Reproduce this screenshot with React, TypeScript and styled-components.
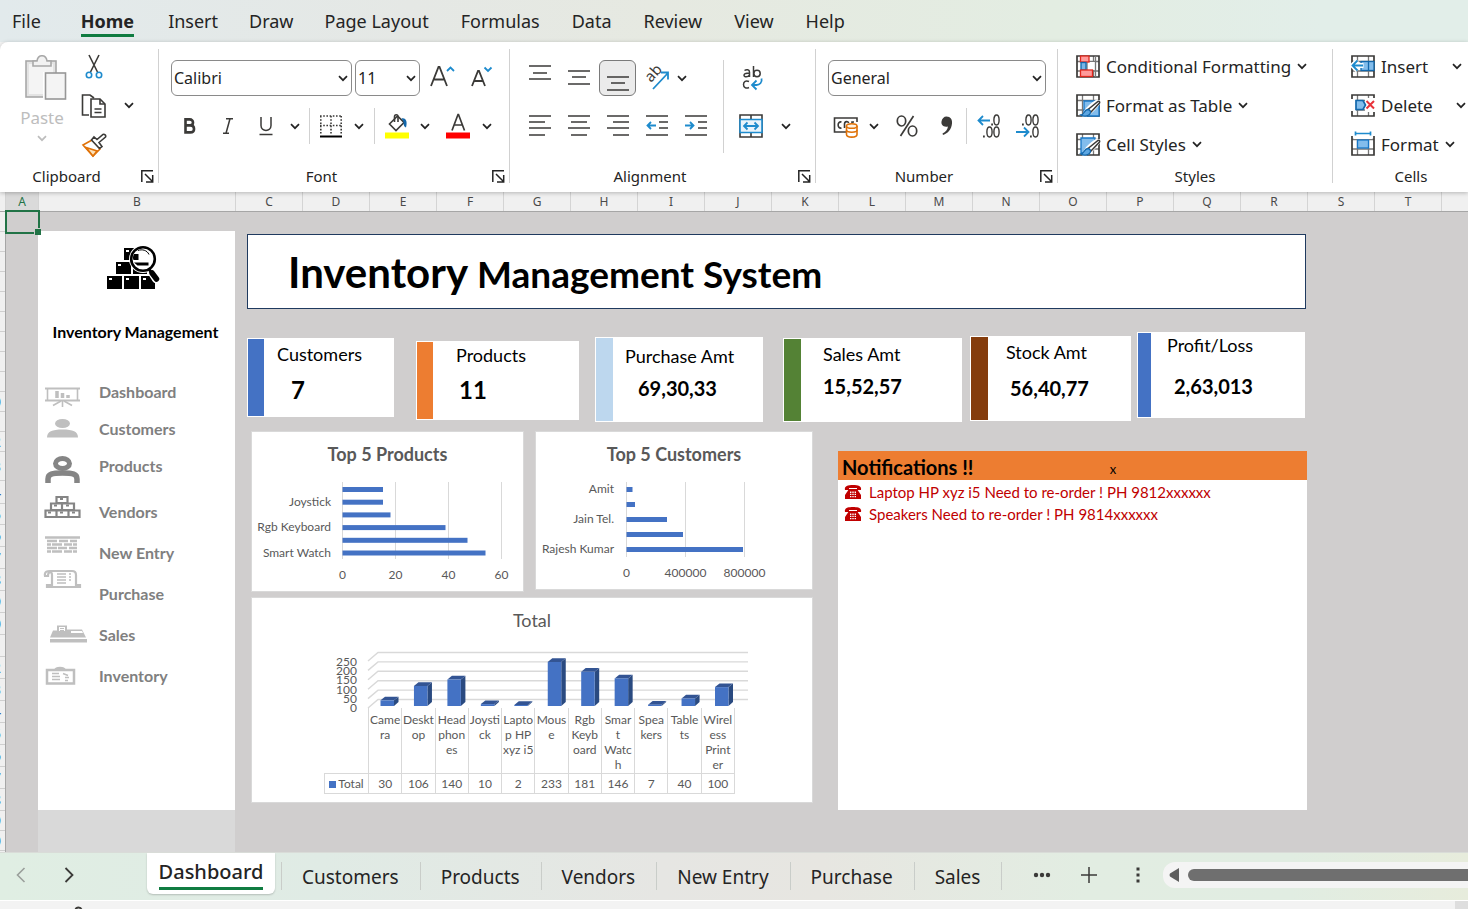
import React from "react";
import styled, { createGlobalStyle, css } from "styled-components";

const ui = `"Noto Sans", "Open Sans", sans-serif`;
const sheetFont = `Lato, "Open Sans", sans-serif`;
const ink = "#242424";
const line = "#3b3a38";
const azure = "#1e8bcd";
const green = "#107c41";

const GlobalStyle = createGlobalStyle`
  *, *::before, *::after { box-sizing: border-box; }
  body { margin: 0; font-family: ${ui}; color: ${ink}; background: #f3f3f3; overflow-x: hidden; }
  button, select { font: inherit; color: inherit; }
  button { border: 0; padding: 0; background: none; cursor: pointer; }
  svg { display: block; }
  ul { list-style: none; margin: 0; padding: 0; }
  h1, h2, p { margin: 0; }
`;

const Page = styled.div`
  display: flex;
  flex-direction: column;
  min-height: 100vh;
  overflow: hidden;
`;

/* ---------- menu ---------- */

const MenuBar = styled.nav`
  display: flex;
  flex: none;
  height: 42px;
  padding: 0 12px;
  background: linear-gradient(90deg, #e2eaec 0%, #e5e8e5 28%, #e6e9e1 45%, #e3ede2 72%, #e2eee9 90%, #e2eee9 100%);
`;

const MenuItem = styled.button<{ $active?: boolean; $after?: number }>`
  height: 42px;
  margin-right: ${(p) => p.$after ?? 32}px;
  font-size: 18px;
  line-height: 42px;
  white-space: nowrap;
  font-weight: ${(p) => (p.$active ? 700 : 400)};
  ${(p) =>
    p.$active &&
    css`
      background: linear-gradient(${green}, ${green}) 0 34px / 100% 3px no-repeat;
    `}
`;

/* ---------- ribbon ---------- */

const Ribbon = styled.div`
  display: flex;
  flex: none;
  height: 150px;
  padding: 5px 0 3px;
  background: #fff;
  border-radius: 8px 0 0 0;
  box-shadow: 0 1px 4px rgba(0, 0, 0, 0.25);
  position: relative;
  z-index: 2;
`;

const Group = styled.section<{ $width: number }>`
  display: flex;
  flex-direction: column;
  flex: none;
  width: ${(p) => p.$width}px;
`;

const GroupBody = styled.div<{ $left: number; $top?: number }>`
  display: flex;
  height: 117px;
  padding: ${(p) => p.$top ?? 0}px 0 0 ${(p) => p.$left}px;
`;

const GroupFooter = styled.footer<{ $launch?: boolean }>`
  display: grid;
  grid-template-columns: ${(p) => (p.$launch ? "1fr 25px" : "1fr")};
  align-items: center;
  height: 24px;
  font-size: 15px;
  text-align: center;
`;

const GroupRule = styled.i`
  flex: none;
  width: 1px;
  height: 134px;
  margin-top: 2px;
  background: #d1d1d1;
`;

const Rule = styled.i<{ $height: number; $gap?: number }>`
  flex: none;
  width: 1px;
  height: ${(p) => p.$height}px;
  margin: 0 ${(p) => p.$gap ?? 0}px;
  background: #d1d1d1;
`;

const Stack = styled.div<{ $gap?: number }>`
  display: flex;
  flex-direction: column;
  gap: ${(p) => p.$gap ?? 0}px;
`;

const Row = styled.div<{ $height?: number; $gap?: number }>`
  display: flex;
  align-items: center;
  height: ${(p) => p.$height ?? 36}px;
  gap: ${(p) => p.$gap ?? 0}px;
`;

const IconButton = styled.button<{ $width?: number; $on?: boolean }>`
  display: flex;
  flex: none;
  align-items: center;
  justify-content: center;
  width: ${(p) => p.$width ?? 38}px;
  height: 36px;
  ${(p) =>
    p.$on &&
    css`
      margin: 0 1px;
      background: #ebebeb;
      border: 1px solid #7a7a7a;
      border-radius: 6px;
    `}
`;

const PasteButton = styled.button`
  display: flex;
  flex-direction: column;
  align-items: center;
  width: 46px;
  height: 108px;
  margin-top: 8px;
  color: #bdbdbd;
  font-size: 17px;
  line-height: 24px;
  gap: 5px;
`;

const Picker = styled.div<{ $width: number }>`
  position: relative;
  width: ${(p) => p.$width}px;
  height: 36px;
`;

const Select = styled.select`
  appearance: none;
  width: 100%;
  height: 36px;
  padding: 0 2px;
  border: 1px solid #8a8a8a;
  border-radius: 6px;
  background: #fff;
  font-size: 16px;
`;

const PickerArrow = styled.span`
  position: absolute;
  right: 4px;
  top: 15px;
  pointer-events: none;
`;

const TextButton = styled.button<{ $width?: number }>`
  display: flex;
  align-items: center;
  height: 39px;
  gap: 6px;
  width: ${(p) => (p.$width ? `${p.$width}px` : "auto")};
  font-size: 17px;
  white-space: nowrap;
`;

const LaunchButton = styled.button`
  display: flex;
  justify-content: flex-end;
  padding-right: 4px;
`;

const Chevron = ({ color = ink }: { color?: string }) => (
  <svg width="10" height="7" viewBox="0 0 10 7" fill="none" stroke={color} strokeWidth="1.7">
    <path d="M1 1.2 5 5.2 9 1.2" />
  </svg>
);

const Launcher = () => (
  <svg width="13" height="13" viewBox="0 0 13 13" fill="none" stroke={ink} strokeWidth="1.5">
    <path d="M.8 12V.8H12M4 4l7 7M11.7 5v7H5" />
  </svg>
);

const Footer = ({ label, launch }: { label: string; launch?: boolean }) => (
  <GroupFooter $launch={launch}>
    <span>{label}</span>
    {launch && (
      <LaunchButton aria-label={`${label} settings`}>
        <Launcher />
      </LaunchButton>
    )}
  </GroupFooter>
);

const MoreButton = ({ label, width = 20, color }: { label: string; width?: number; color?: string }) => (
  <IconButton $width={width} aria-label={label}>
    <Chevron color={color} />
  </IconButton>
);

const PasteIcon = () => (
  <svg width="50" height="46" viewBox="-8 0 50 46" fill="#e3e3e3" stroke="#a8a8a8" strokeWidth="1.6">
    <rect x="1" y="6" width="30" height="36" />
    <rect x="4" y="9" width="24" height="30" fill="#f4f4f4" stroke="none" />
    <path d="M8 11V6h4c1-7 9-7 10 0h4v5z" fill="#f2f2f2" />
    <rect x="18" y="17" width="4" height="28" fill="#fff" stroke="none" />
    <rect x="20.5" y="18" width="20" height="26" fill="#f4f4f4" stroke="#979797" />
  </svg>
);

const CutIcon = () => (
  <svg width="18" height="26" viewBox="0 0 18 26" fill="none" strokeWidth="1.6">
    <path d="M4 1 12.5 18M14 1 5.5 18" stroke={line} />
    <circle cx="4" cy="21" r="2.7" stroke={azure} />
    <circle cx="14" cy="21" r="2.7" stroke={azure} />
  </svg>
);

const CopyIcon = () => (
  <svg width="26" height="26" viewBox="0 0 26 26" fill="#fff" stroke={line} strokeWidth="1.6">
    <path d="M8 22H1.5V2H9l4 3" />
    <path d="M10 6h9l5 5v13H10z" />
    <path d="M19 6v5h5M13.5 16h7M13.5 19.5h7" fill="none" />
  </svg>
);

const BrushIcon = () => (
  <svg width="26" height="26" viewBox="0 0 26 26" fill="none" strokeWidth="1.6">
    <path d="M2 13 11 8l8 9-7 7z" fill="#fff" stroke="#e07208" />
    <path d="M5 15.500l11 3.500-4 5z" fill="#fde2b8" stroke="#e07208" />
    <path d="M10.500 8l8 8.500 2.500-2-3-4 6.500-5.500c.8-1.500-1-3.200-2.500-2.500L16 7.500 13 5z" fill="#fff" stroke={line} />
  </svg>
);

const GrowIcon = ({ up }: { up?: boolean }) => (
  <svg width="26" height="26" viewBox="0 0 26 26" fill="none" strokeWidth="1.8">
    {up ? (
      <>
        <path d="M2 21 9.500 2h1L18 21M5 14.500h10" stroke={line} />
        <path d="M18 6l3.500-3.500L25 6" stroke={azure} />
      </>
    ) : (
      <>
        <path d="M2 21 8 6h1l6 15M4.500 16h8" stroke={line} />
        <path d="M14.500 2.500 18 6l3.500-3.500" stroke={azure} />
      </>
    )}
  </svg>
);

const BoldIcon = () => (
  <svg width="14" height="18" viewBox="0 0 14 18" fill="none" stroke={line} strokeWidth="2.6">
    <path d="M2.500 2.400h4.200c4.400 0 4.400 6 0 6H2.500zM2.500 8.400h4.800c5 0 5 7 0 7H2.500z" />
  </svg>
);

const ItalicIcon = () => (
  <svg width="14" height="18" viewBox="0 0 14 18" fill="none" stroke={line} strokeWidth="1.5">
    <path d="M5 1.700h7M2 16.200h6M9 1.700 5 16.200" />
  </svg>
);

const UnderlineIcon = () => (
  <svg width="16" height="20" viewBox="0 0 16 20" fill="none" stroke={line} strokeWidth="1.5">
    <path d="M3 1v8.500c0 6.500 10 6.500 10 0V1M1.500 18.500h13" />
  </svg>
);

const BordersIcon = () => (
  <svg width="24" height="24" viewBox="0 0 24 24" fill="none" stroke={line} strokeWidth="1.6">
    <path d="M1 2h22M1 11.500h22M1.800 2v18M12 2v18M22.200 2v18" strokeDasharray="1.6 1.6" />
    <path d="M1 22.500h22" stroke="#000" strokeWidth="2" />
  </svg>
);

const FillIcon = () => (
  <svg width="24" height="26" viewBox="0 0 24 26" fill="none" stroke={line} strokeWidth="1.6">
    <path d="M12.500 3 4.500 11l6.500 6.500 8-8z" fill="#fff" />
    <path d="M9.500 9V4c0-3 3.500-3 3.500 0v5" />
    <path d="M16.500 5.500c5-1 6 4 4.500 9-2.500-1-2.500-4-2.500-6z" fill="#1267ab" stroke="none" />
    <rect y="19.500" width="24" height="6" fill="#ff0" stroke="none" />
  </svg>
);

const FontColorIcon = () => (
  <svg width="24" height="26" viewBox="0 0 24 26" fill="none" stroke={line} strokeWidth="1.7">
    <path d="M6 17.500 12 1.500h.5l6 16M8 12h8.500" />
    <rect y="19.500" width="24" height="6" fill="#f00" stroke="none" />
  </svg>
);

/** Horizontal rules given as [x1, x2, y] on a 22px square. */
const Lines = ({ rules, children }: { rules: number[][]; children?: React.ReactNode }) => (
  <svg width="22" height="22" viewBox="0 0 22 22" overflow="visible" fill="none" strokeWidth="1.6">
    <path d={rules.map(([a, b, y]) => `M${a} ${y}H${b}`).join("")} stroke={line} />
    {children}
  </svg>
);

const OrientIcon = () => (
  <svg width="26" height="26" viewBox="0 0 26 26" overflow="visible" fill="none">
    <text transform="translate(7 18) rotate(-48)" fontSize="15" fill={line}>
      ab
    </text>
    <path d="M9 24 24 8M17 7.500h7v7" stroke={azure} strokeWidth="1.8" />
  </svg>
);

const WrapIcon = () => (
  <svg width="24" height="26" viewBox="0 0 24 26" fill="none" strokeWidth="1.5" stroke={line}>
    <path d="M4.500 5.500c2-1.500 5-1 5 1.500V12M9.500 8c-3 0-5.500.3-5.500 2.300 0 2 4 2.300 5.500-.5" />
    <path d="M13.500 1v11" />
    <circle cx="17" cy="8.500" r="3.200" />
    <path d="M9 16.500c-3-1.500-5.500 0-5.500 3s2.500 4.500 5.500 3" />
    <path d="M21.500 13.500c1 4-2 6.500-5 6.500h-4M16.500 15.500 12 20l4.500 4.500" stroke={azure} strokeWidth="1.8" />
  </svg>
);

const MergeIcon = () => (
  <svg width="24" height="24" viewBox="0 0 24 24" fill="none" strokeWidth="1.6">
    <path d="M1 1h22v22H1zM12 1v22" stroke={line} />
    <path d="M1 5.500h22v13H1z" fill="#eaf4fb" stroke={azure} />
    <path d="M5 12h14M8.500 8.500 5 12l3.500 3.500M15.500 8.500 19 12l-3.500 3.500" stroke={azure} strokeWidth="1.8" />
  </svg>
);

const MoneyIcon = () => (
  <svg width="26" height="24" viewBox="0 0 26 24" fill="none" strokeWidth="1.6" stroke={line}>
    <path d="M13 18H1.500V4H24v4M8.500 8C4 7 4 15 8.500 14M11.500 14v-4c0-3 4-3 4-1M19 9V8h2" />
    <path d="M13.500 12v8.500c0 3.500 10.500 3.500 10.500 0V12" fill="#fff" stroke="#e07208" />
    <ellipse cx="18.750" cy="12" rx="5.250" ry="2.300" fill="#fff4e5" stroke="#e07208" />
    <path d="M13.500 16c0 3 10.500 3 10.500 0" stroke="#e07208" />
  </svg>
);

const PercentIcon = () => (
  <svg width="24" height="24" viewBox="0 0 24 24" fill="none" stroke={line} strokeWidth="1.7">
    <ellipse cx="6.500" cy="7" rx="4.200" ry="5" />
    <ellipse cx="17.500" cy="17" rx="4.200" ry="5" />
    <path d="M18.500 2 5.500 22" />
  </svg>
);

const CommaIcon = () => (
  <svg width="14" height="22" viewBox="0 0 14 22" fill={line}>
    <path d="M6.500 1.500c4 0 6 3 5.500 7-.5 5.500-4 10-9 11.500l-.5-1.500c3-1.500 5-3.500 5.500-7-5 1-7-2-6.500-5 .4-3 2.500-5 5-5z" />
  </svg>
);

const DecimalIcon = ({ more }: { more?: boolean }) => (
  <svg width="26" height="26" viewBox="0 0 26 26" fill="none" stroke={line} strokeWidth="1.4">
    {more ? (
      <>
        <ellipse cx="20.500" cy="7" rx="2.600" ry="5" />
        <ellipse cx="13.500" cy="19" rx="2.600" ry="5" />
        <ellipse cx="20.500" cy="19" rx="2.600" ry="5" />
        <path d="M7 23.500h1.800M15.200 11.500H17" strokeWidth="1.8" />
        <path d="M14 7.500H2.500M7 3 2.500 7.500 7 12" stroke={azure} strokeWidth="1.8" />
      </>
    ) : (
      <>
        <ellipse cx="13.500" cy="7" rx="2.600" ry="5" />
        <ellipse cx="20.500" cy="7" rx="2.600" ry="5" />
        <ellipse cx="20.500" cy="19" rx="2.600" ry="5" />
        <path d="M7 11.500h1.800M15 23.500h1.800" strokeWidth="1.8" />
        <path d="M1 19h12.500M9 14.500l4.500 4.500L9 23.500" stroke={azure} strokeWidth="1.8" />
      </>
    )}
  </svg>
);

const gridLines = "M1 6.500h22M1 16h22M6.500 1v21M17.500 1v21";

const GridIcon = ({ children, top }: { children: React.ReactNode; top?: boolean }) => (
  <svg width="24" height="23" viewBox="0 0 24 23" overflow="visible" fill="none" strokeWidth="1.3">
    <path d={gridLines} stroke="#777" />
    <path d={top ? "M1 3v19h22V3" : "M1 1h22v21H1z"} stroke={line} strokeWidth="1.7" />
    {children}
  </svg>
);

const CondIcon = () => (
  <GridIcon>
    <rect x="11" y="7" width="9" height="8" fill="#fff" />
    <path d="M11 1v21M19.500 1v21" stroke="#777" />
    <rect x="4.500" y="1" width="8.500" height="6" fill="#ff9a9a" stroke="#e0281e" />
    <rect x="5" y="7.500" width="5" height="7.500" fill="#7ab6e8" stroke="#1267ab" />
    <rect x="4.500" y="15" width="12" height="6.500" fill="#ff9a9a" stroke="#e0281e" />
  </GridIcon>
);

const PaintedGrid = ({ full }: { full?: boolean }) => (
  <GridIcon>
    <path d={full ? "M5 5h14v5L9 20H5z" : "M8 7h15v15H8z"} fill="#83bdec" stroke="#1878c8" />
    <path d="M8 21.500c5 0 14-10 16-14L20.500 7C17 9 11 14 9.500 17z" fill="#fff" stroke="#fff" strokeWidth="2.5" />
    <path d="M12 15.500 22 7.500c1.500-.5 2 .5 1.500 1.500L15 18z" fill="#fff" stroke={line} strokeWidth="1.5" />
    <path d="M5 21c3 0 3-5 6.500-5.500 3 0 4 3 2 5-2 1.800-6 2.500-8.500.5z" fill="#5ea7e2" stroke="#1267ab" />
  </GridIcon>
);

const InsertCellsIcon = () => (
  <GridIcon>
    <rect x="10" y="6.500" width="13" height="9" fill="#83bdec" stroke="#1267ab" />
    <path d="M17.500 6.500v9" stroke="#1267ab" />
    <path d="M12.500 10.500H1.500M6.500 5.500l-5 5 5 5" stroke="#fff" strokeWidth="5" />
    <path d="M12 10.500H1.500M6.500 5.500l-5 5 5 5" stroke={azure} strokeWidth="1.8" />
  </GridIcon>
);

const DeleteCellsIcon = () => (
  <GridIcon>
    <path d="M0 5h5v12H0zM14 4h10v14H14z" fill="#fff" />
    <path d="M5 6.500h7l2.500 4.500-2.500 4.500H5z" fill="#83bdec" stroke="#1267ab" strokeWidth="1.7" />
    <path d="m15.500 7 7.500 7.500M23 7l-7.500 7.500" stroke="#e8333a" strokeWidth="2" />
  </GridIcon>
);

const FormatCellsIcon = () => (
  <GridIcon top>
    <path d="M3 0h18v6H3z" fill="#fff" />
    <path d="M4.500-1.500v4m15-4v4M4.500.500h15" stroke={azure} strokeWidth="1.7" />
    <rect x="6.500" y="7" width="11" height="8" fill="#83bdec" stroke="#1878c8" />
  </GridIcon>
);

/* ---------- sheet frame ---------- */

const ColumnHeads = styled.div`
  display: flex;
  flex: none;
  height: 20px;
  background: #f0f0f0;
  border-bottom: 1px solid #a6a6a6;
  overflow: hidden;
`;

const ColumnHead = styled.div<{ $width: number; $selected?: boolean }>`
  flex: none;
  width: ${(p) => p.$width}px;
  height: 19px;
  border-right: 1px solid #d4d4d4;
  font-size: 12px;
  line-height: 20px;
  text-align: center;
  color: #4a4a4a;
  ${(p) =>
    p.$selected &&
    css`
      color: #217346;
      background: #dadada;
    `}
`;

const Sheet = styled.main`
  display: flex;
  flex: 1;
  background: #d0cece;
  position: relative;
`;

const RowHeads = styled.div`
  flex: none;
  width: 6px;
  background: #f0f0f0;
  border-right: 1px solid #a6a6a6;
  overflow: hidden;
`;

const RowHead = styled.div<{ $height: number }>`
  display: flex;
  justify-content: flex-end;
  height: ${(p) => p.$height}px;
  border-bottom: 1px solid #cfcfcf;
`;

const RowNumber = styled.span<{ $height: number }>`
  flex: none;
  width: 24px;
  font-size: 14px;
  line-height: ${(p) => p.$height}px;
  text-align: center;
  color: #2d5a9b;
`;

const ActiveCell = styled.div`
  position: absolute;
  left: 5px;
  top: -2px;
  width: 35px;
  height: 24px;
  border: 2px solid #217346;
  &::after {
    content: "";
    position: absolute;
    right: -3px;
    bottom: -3px;
    width: 7px;
    height: 7px;
    background: #217346;
    border: 1px solid #d0cece;
    border-width: 1px 0 0 1px;
  }
`;

/* ---------- dashboard sidebar ---------- */

const Sidebar = styled.aside`
  display: flex;
  flex-direction: column;
  flex: none;
  width: 197px;
  margin-left: 32px;
  padding-top: 19px;
  font-family: ${sheetFont};
`;

const SidePanel = styled.div`
  height: 579px;
  padding-top: 14px;
  background: #fff;
`;

const SideRest = styled.div`
  flex: 1;
  min-height: 41px;
  background: #d9d9d9;
`;

const SideTitle = styled.h2`
  margin: 31px 0;
  padding-right: 2px;
  font-size: 16px;
  line-height: 20px;
  font-weight: 700;
  color: #000;
  text-align: center;
  white-space: nowrap;
`;

const SideLink = styled.a<{ $height: number; $before?: number }>`
  display: flex;
  align-items: center;
  height: ${(p) => p.$height}px;
  margin-top: ${(p) => p.$before ?? 0}px;
  font-size: 16px;
  font-weight: 700;
  color: #808080;
  text-decoration: none;
  svg {
    flex: none;
    margin-right: 1px;
    overflow: visible;
  }
`;

const LogoRow = styled.div`
  display: flex;
  justify-content: center;
  height: 46px;
  padding-right: 6px;
`;

const Logo = () => (
  <svg width="56" height="46" viewBox="0 0 56 46">
    <path d="M1 31h15v13H1zM18 31h15v13H18zM35 31h14v13H35zM10 17h15v12H10zM27 17h14v12H27zM18 3h14v12H18z" fill="#000" />
    <path d="M3 33h3v2H3zM20 33h3v2h-3zM37 33h3v2h-3zM12 19h3v2h-3zM20 5h3v2h-3z" fill="#fff" />
    <path d="m43 23 7 11" stroke="#fff" strokeWidth="8" strokeLinecap="round" />
    <circle cx="37" cy="14" r="14" fill="#fff" />
    <path d="m43 24 2 3" stroke="#000" strokeWidth="3" />
    <path d="m46 28 4.500 6" stroke="#000" strokeWidth="5.500" strokeLinecap="round" />
    <circle cx="37" cy="14" r="11.800" fill="#fff" stroke="#000" strokeWidth="2.600" />
    <path d="M28 9c-1 2-1.500 4-.5 6h5V9zM28 17.500h14.500v3h-11z" fill="#000" />
    <path d="M32 5.500c4-1.500 9-.5 11 4" stroke="#000" strokeWidth="1" fill="none" />
  </svg>
);

const light = "#bfbfbf";
const dark = "#858585";

const sideItems = [
  {
    label: "Dashboard",
    height: 37,
    art: (
      <g fill="none" stroke={light}>
        <path d="M7 15.500h35" strokeWidth="2" />
        <path d="M7 27.500h35" strokeWidth="2" />
        <path d="M9.500 16v11M39.500 16v11" strokeWidth="1.6" />
        <path d="M24.500 28v6M23 28l-8 4.500M26 28l8 4.500" strokeWidth="1.6" />
        <path d="M19 18v7M24.500 20v5M30 22v3" strokeWidth="3.5" />
      </g>
    ),
  },
  {
    label: "Customers",
    height: 37,
    art: (
      <g fill={light}>
        <ellipse cx="24.500" cy="13.500" rx="7.500" ry="4.500" />
        <path d="M9 27.500c0-6 5-8 15.500-8S40 21.500 40 27.500z" />
      </g>
    ),
  },
  {
    label: "Products",
    height: 37,
    art: (
      <g fill="none" stroke={dark}>
        <ellipse cx="24.500" cy="16.500" rx="7" ry="5" strokeWidth="5" />
        <path d="M10 36v-4c0-5 4-6 14.500-6S39 27 39 32v4" strokeWidth="5.500" />
      </g>
    ),
  },
  {
    label: "Vendors",
    height: 41,
    before: 7,
    art: (
      <g fill="none" stroke={dark} strokeWidth="2.2">
        <path d="M18.500 6h11v6h-11zM13 12.500h11V19H13zM24 12.500h12V19H24zM7.500 19.500h11V26h-11zM18.500 19.500h12V26h-12zM30.500 19.500h11V26h-11z" />
        <path d="M22 8h3M16 14.500h3M28 14.500h3M10 21.500h3M22 21.500h3M34 21.500h3" />
      </g>
    ),
  },
  {
    label: "New Entry",
    height: 41,
    art: (
      <g fill="none" stroke={light} strokeWidth="2.4">
        <path d="M7 5.500h35" />
        <path d="M9 9h10M21 9h9M32 9h7M9 12.500h4M14 12.500h10M26 12.500h8M35 12.500h4M9 16h10M20 16h9M31 16h8M9 19.500h4M14 19.500h10M26 19.500h8M35 19.500h4" />
      </g>
    ),
  },
  {
    label: "Purchase",
    height: 41,
    art: (
      <g fill="none" stroke={light} strokeWidth="2.2">
        <path d="M7 3c-1-5 3-5 5-5h22c3 0 4 2 4 4v10h4v2H9v-2h5V2c0-4-4-4-4 1z" />
        <path d="M19 1h9M31 1h2M19 4h9M31 4h2M19 7h9M31 7h2M19 10h9" strokeWidth="1.5" />
      </g>
    ),
  },
  {
    label: "Sales",
    height: 41,
    art: (
      <g fill={light}>
        <path d="M12 23.500l3-7h4v-5h10v4h15l4 8zM12 25h37v3.500H12z" />
        <path d="M21 13h6v4h-6zM33 17h11l1 2H33z" fill="#fff" />
        <path d="M22 14h4v1h-4zM22 16h4v1h-4z" />
      </g>
    ),
  },
  {
    label: "Inventory",
    height: 41,
    art: (
      <g fill="none" stroke={light} strokeWidth="2">
        <path d="M9 15h27v13.500H9z" strokeWidth="2.5" />
        <path d="M17 15c1-3 9-3 10 0z" fill={light} />
        <path d="M14 18.500h7M14 21.500h8M14 24.500h8M25 18.500l5 2M27 22.500h4M27 25.500h3" strokeWidth="1.4" />
      </g>
    ),
  },
];

/* ---------- dashboard content ---------- */

const Board = styled.div`
  flex: 1;
  min-width: 0;
  padding: 22px 161px 41px 12px;
  font-family: ${sheetFont};
`;

const TitleBox = styled.h1`
  height: 75px;
  margin-right: 1px;
  padding-left: 40px;
  border: 1px solid #1f3a5f;
  background: #fff;
  color: #000;
  font-size: 37px;
  line-height: 75px;
  font-weight: 700;
  white-space: nowrap;
  span {
    font-size: 42px;
  }
`;

const Cards = styled.div`
  display: grid;
  grid-template-columns: 169fr 179fr 188fr 187fr 167fr 169fr;
  align-items: start;
  height: 98px;
  margin: 23px 1px 0 0;
`;

const Card = styled.article<{ $top: number; $height: number; $after: number; $color: string; $bar: number }>`
  height: ${(p) => p.$height}px;
  margin: ${(p) => p.$top}px ${(p) => p.$after}px 0 0;
  border: 1px solid #fff;
  border-left: 0;
  background: linear-gradient(${(p) => p.$color}, ${(p) => p.$color}) 1px 0 / ${(p) => p.$bar}px 100% no-repeat #fff;
  color: #000;
`;

const CardTitle = styled.h2<{ $left: number; $top: number }>`
  padding: ${(p) => p.$top}px 0 0 ${(p) => p.$left}px;
  font-size: 18px;
  line-height: 24px;
  font-weight: 400;
  white-space: nowrap;
`;

const CardValue = styled.p<{ $left: number; $gap: number; $large?: boolean }>`
  padding: ${(p) => p.$gap}px 0 0 ${(p) => p.$left}px;
  font-size: ${(p) => (p.$large ? 24 : 20)}px;
  line-height: 24px;
  font-weight: 700;
`;

const cards = [
  { title: "Customers", value: "7", color: "#4472c4", bar: 16, top: 6, height: 79, after: 22, tl: 30, vl: 44, tt: 3, gap: 12, large: true },
  { title: "Products", value: "11", color: "#ed7d31", bar: 16, top: 9, height: 79, after: 16, tl: 40, vl: 43, tt: 1, gap: 11, large: true },
  { title: "Purchase Amt", value: "69,30,33", color: "#bdd7ee", bar: 17, top: 5, height: 85, after: 20, tl: 30, vl: 43, tt: 6, gap: 8 },
  { title: "Sales Amt", value: "15,52,57", color: "#548235", bar: 17, top: 6, height: 84, after: 8, tl: 40, vl: 40, tt: 3, gap: 8 },
  { title: "Stock Amt", value: "56,40,77", color: "#843c0c", bar: 17, top: 4, height: 85, after: 6, tl: 36, vl: 40, tt: 3, gap: 12 },
  { title: "Profit/Loss", value: "2,63,013", color: "#4472c4", bar: 13, top: 0, height: 86, after: 1, tl: 30, vl: 37, tt: 0, gap: 17 },
];

const Lower = styled.div`
  display: grid;
  grid-template-columns: 562fr 469fr;
  gap: 25px;
  padding-left: 4px;
`;

const Charts = styled.div`
  display: grid;
  grid-template-columns: 273fr 278fr;
  column-gap: 11px;
  row-gap: 5px;
  align-items: start;
  align-content: start;
  padding-top: 1px;
`;

const ChartPanel = styled.figure<{ $height: number; $wide?: boolean }>`
  margin: 0;
  height: ${(p) => p.$height}px;
  border: 1px solid #d9d9d9;
  background: #fff;
  color: #595959;
  ${(p) => p.$wide && "grid-column: 1 / -1;"}
`;

const ChartTitle = styled.figcaption<{ $plain?: boolean }>`
  padding-top: 11px;
  font-size: 18px;
  line-height: 22px;
  font-weight: ${(p) => (p.$plain ? 400 : 700)};
  text-align: center;
`;

const Plot = styled.svg`
  width: 100%;
  height: 116px;
  font-family: ${sheetFont};
  font-size: 12px;
  fill: #595959;
`;

type BarChartProps = {
  origin: number;
  step: number;
  pitch: number;
  bottom: number;
  labelEnd: number;
  ticks: string[];
  bars: { width: number; label?: string }[];
  viewWidth: number;
};

/** Horizontal bar chart: one bar per entry from the top down. */
const BarChart = ({ origin, step, pitch, bottom, labelEnd, ticks, bars, viewWidth }: BarChartProps) => (
  <Plot viewBox={`0 0 ${viewWidth} 116`}>
    {ticks.map((t, i) => (
      <g key={t}>
        <path d={`M${origin + i * step} 17V${bottom}`} stroke="#d9d9d9" />
        <text x={origin + i * step} y={bottom + 20} textAnchor="middle">
          {t}
        </text>
      </g>
    ))}
    {bars.map((b, i) => (
      <g key={i}>
        <rect x={origin} y={22 + i * pitch} width={b.width} height="5" fill="#4472c4" />
        {b.label && (
          <text x={labelEnd} y={28 + i * pitch} textAnchor="end">
            {b.label}
          </text>
        )}
      </g>
    ))}
  </Plot>
);

const TotalArea = styled.div`
  width: 424px;
  margin-left: 72px;
`;

const TotalPlot = styled.svg`
  width: 424px;
  height: 62px;
  margin-top: 15px;
  overflow: visible;
  font-family: ${sheetFont};
  font-size: 12px;
  fill: #595959;
`;

const totals: [string[], number][] = [
  [["Came", "ra"], 30],
  [["Deskt", "op"], 106],
  [["Head", "phon", "es"], 140],
  [["Joysti", "ck"], 10],
  [["Lapto", "p HP", "xyz i5"], 2],
  [["Mous", "e"], 233],
  [["Rgb", "Keyb", "oard"], 181],
  [["Smar", "t", "Watc", "h"], 146],
  [["Spea", "kers"], 7],
  [["Table", "ts"], 40],
  [["Wirel", "ess", "Print", "er"], 100],
];

const TotalChart = () => (
  <TotalPlot viewBox="0 0 424 62">
    {[0, 50, 100, 150, 200, 250].map((v, i) => (
      <g key={v}>
        <path d={`M44 ${62 - i * 9.4}L54 ${53.5 - i * 9.4}H424`} fill="none" stroke="#d9d9d9" strokeWidth="1.4" />
        <text x="33" y={66 - i * 9.2} textAnchor="end">
          {v}
        </text>
      </g>
    ))}
    {totals.map(([, v], i) => {
      const x = 56.5 + i * 33.45;
      const top = 60 - Math.max(v * 0.189, 1);
      return (
        <g key={i}>
          <path d={`M${x + 13.5} ${top}l4.500-3.700V56l-4.500 4z`} fill="#2a4a80" />
          <path d={`M${x} ${top}l4.500-3.700h13.500l-4.500 3.700z`} fill="#335493" />
          <rect x={x} y={top} width="13.5" height={60 - top} fill="#4472c4" />
        </g>
      );
    })}
  </TotalPlot>
);

const TotalTable = styled.table`
  width: 411px;
  table-layout: fixed;
  border-collapse: collapse;
  font-size: 12px;
  line-height: 15px;
  text-align: center;
  th, td {
    padding: 0;
    font-weight: 400;
    border: 1px solid #d9d9d9;
  }
  thead th, thead td {
    height: 65px;
    padding-top: 4px;
    vertical-align: top;
    border-top: 0;
    white-space: nowrap;
  }
  thead td {
    width: 44px;
    border-left: 0;
  }
  tbody th, tbody td {
    height: 20px;
  }
`;

const Key = styled.i`
  display: inline-block;
  width: 7px;
  height: 7px;
  margin-right: 2px;
  background: #4472c4;
`;

const Notices = styled.section`
  height: 359px;
  margin-top: 21px;
  background: #fff;
`;

const NoticeHead = styled.header`
  display: grid;
  grid-template-columns: 270fr 199fr;
  align-items: center;
  height: 29px;
  padding-left: 4px;
  background: #ed7d31;
  color: #000;
  h2 {
    padding-top: 2px;
    font-size: 20px;
    line-height: 28px;
  }
`;

const NoticeClose = styled.button`
  justify-self: start;
  padding-top: 6px;
  font-size: 13px;
`;

const NoticeList = styled.ul`
  padding: 1px 0 0 6px;
`;

const Notice = styled.li`
  display: flex;
  align-items: center;
  gap: 7px;
  height: 22px;
  font-size: 15px;
  color: #c00000;
  white-space: nowrap;
`;

const Phone = () => (
  <svg width="18" height="14" viewBox="0 0 18 14" fill="#c00000">
    <path d="M1 5C0 1 4 0 9 0s9 1 8 5h-4V3H5v2z" />
    <path d="M5 4h8l4 6v4H1v-4z" />
    <path d="M6 6.500h1.400v1.400H6zM8.300 6.500h1.400v1.400H8.300zM10.600 6.500H12v1.400h-1.400zM6 8.700h1.400v1.400H6zM8.300 8.700h1.400v1.400H8.300zM10.600 8.700H12v1.400h-1.400zM6 10.900h1.400v1.400H6zM8.300 10.900h1.400v1.400H8.300zM10.600 10.900H12v1.400h-1.400z" fill="#fff" />
  </svg>
);

/* ---------- sheet tabs ---------- */

const TabBar = styled.div`
  display: flex;
  flex: none;
  height: 48px;
  overflow: hidden;
  border-top: 1px solid #d9dcd8;
  background: linear-gradient(90deg, #e0eee3 0%, #e0ebe5 22%, #e6e6e3 45%, #e7e6e1 56%, #e2ede2 74%, #e1ede2 88%, #e7ecdc 100%);
`;

const TabArrows = styled.div`
  display: flex;
  flex: none;
  align-items: center;
  width: 147px;
  height: 43px;
  padding-left: 12px;
  gap: 30px;
`;

const TabArrow = styled.button`
  display: flex;
  justify-content: center;
  width: 18px;
`;

const ActiveTab = styled.button`
  flex: none;
  height: 41px;
  width: 128px;
  padding-bottom: 3px;
  border-radius: 0 0 6px 6px;
  background: linear-gradient(${green}, ${green}) 12px 34px / 104px 3px no-repeat #fff;
  box-shadow: 0 1px 2px rgba(0, 0, 0, 0.2);
  font-size: 20px;
  line-height: 38px;
  font-weight: 500;
`;

const Tab = styled.button`
  flex: none;
  height: 48px;
  padding: 0 21px 0 20px;
  font-size: 19px;
  line-height: 48px;
  white-space: nowrap;
`;

const TabRule = styled.i<{ $before?: number }>`
  flex: none;
  width: 1px;
  height: 28px;
  margin: 9px 0 0 ${(p) => p.$before ?? 0}px;
  background: #c9cdc9;
`;

const TabTool = styled.button<{ $width: number; $left?: number }>`
  display: flex;
  flex: none;
  justify-content: center;
  align-items: center;
  width: ${(p) => p.$width}px;
  height: 44px;
  padding-left: ${(p) => p.$left ?? 0}px;
`;

const ScrollTrack = styled.div`
  display: flex;
  flex: 1;
  align-items: center;
  gap: 8px;
  height: 26px;
  margin-top: 9px;
  padding-left: 6px;
  background: #f4f4f4;
  border-radius: 12px 0 0 12px;
`;

const ScrollThumb = styled.div`
  flex: 1;
  height: 12px;
  background: #6f6f6f;
  border-radius: 6px 0 0 6px;
`;

const StatusBar = styled.footer`
  flex: none;
  height: 9px;
  border-top: 1px solid #fff;
  background: linear-gradient(#dedede, #dedede) 100% 0 / 13px 100% no-repeat #f3f3f3;
  padding: 5px 0 0 74px;
  overflow: hidden;
`;

const menu: [string, number?][] = [
  ["File", 40],
  ["Home", 34],
  ["Insert", 31],
  ["Draw", 31],
  ["Page Layout"],
  ["Formulas"],
  ["Data"],
  ["Review"],
  ["View"],
  ["Help"],
];

const columns = "CDEFGHIJKLMNOPQRST".split("");
const rowHeights = [20, ...Array(11).fill(20), 29, 23, 21, ...Array(13).fill(22), 20, 20];
const sheetTabs = ["Customers", "Products", "Vendors", "New Entry", "Purchase", "Sales"];

export default function App() {
  return (
    <Page>
      <GlobalStyle />
      <MenuBar aria-label="Ribbon tabs">
        {menu.map(([name, after]) => (
          <MenuItem key={name} $active={name === "Home"} $after={after}>
            {name}
          </MenuItem>
        ))}
      </MenuBar>

      <Ribbon>
        <Group $width={158}>
          <GroupBody $left={19}>
            <PasteButton>
              <PasteIcon />
              <span>Paste</span>
              <Chevron color="#bdbdbd" />
            </PasteButton>
            <Stack>
              <Row $height={39}>
                <IconButton $width={58} aria-label="Cut"><CutIcon /></IconButton>
              </Row>
              <Row $height={39}>
                <IconButton $width={58} aria-label="Copy"><CopyIcon /></IconButton>
                <MoreButton label="Copy options" width={12} />
              </Row>
              <Row $height={39}>
                <IconButton $width={58} aria-label="Format painter"><BrushIcon /></IconButton>
              </Row>
            </Stack>
          </GroupBody>
          <Footer label="Clipboard" launch />
        </Group>
        <GroupRule />

        <Group $width={350}>
          <GroupBody $left={12} $top={13}>
            <Stack $gap={12}>
              <Row $gap={3}>
                <Picker $width={181}>
                  <Select aria-label="Font" defaultValue="Calibri"><option>Calibri</option></Select>
                  <PickerArrow><Chevron /></PickerArrow>
                </Picker>
                <Picker $width={65}>
                  <Select aria-label="Font size" defaultValue="11"><option>11</option></Select>
                  <PickerArrow><Chevron /></PickerArrow>
                </Picker>
                <IconButton aria-label="Increase font size"><GrowIcon up /></IconButton>
                <IconButton aria-label="Decrease font size"><GrowIcon /></IconButton>
              </Row>
              <Row>
                <IconButton aria-label="Bold"><BoldIcon /></IconButton>
                <IconButton aria-label="Italic"><ItalicIcon /></IconButton>
                <IconButton aria-label="Underline"><UnderlineIcon /></IconButton>
                <MoreButton label="Underline options" />
                <Rule $height={36} $gap={4} />
                <IconButton $width={34} aria-label="Borders"><BordersIcon /></IconButton>
                <MoreButton label="Border options" width={22} />
                <Rule $height={36} $gap={4} />
                <IconButton $width={36} aria-label="Fill color"><FillIcon /></IconButton>
                <MoreButton label="Fill options" />
                <IconButton $width={46} aria-label="Font color"><FontColorIcon /></IconButton>
                <MoreButton label="Font color options" width={12} />
              </Row>
            </Stack>
          </GroupBody>
          <Footer label="Font" launch />
        </Group>
        <GroupRule />

        <Group $width={305}>
          <GroupBody $left={10} $top={13}>
            <Stack $gap={12}>
              <Row>
                <IconButton $width={39} aria-label="Top align"><Lines rules={[[0, 22, -1], [4, 18, 6], [0, 22, 12]]} /></IconButton>
                <IconButton $width={39} aria-label="Middle align"><Lines rules={[[0, 22, 4], [4, 18, 10], [0, 22, 17]]} /></IconButton>
                <IconButton $width={37} $on aria-label="Bottom align"><Lines rules={[[0, 22, 10], [4, 18, 16], [0, 22, 23]]} /></IconButton>
                <IconButton $width={39} aria-label="Orientation"><OrientIcon /></IconButton>
                <MoreButton label="Orientation options" width={12} />
              </Row>
              <Row>
                <IconButton $width={39} aria-label="Align left"><Lines rules={[[0, 22, 1], [0, 16, 7], [0, 22, 13], [0, 16, 20]]} /></IconButton>
                <IconButton $width={39} aria-label="Center"><Lines rules={[[0, 22, 1], [3, 19, 7], [0, 22, 13], [3, 19, 20]]} /></IconButton>
                <IconButton $width={39} aria-label="Align right"><Lines rules={[[0, 22, 1], [6, 22, 7], [0, 22, 13], [6, 22, 20]]} /></IconButton>
                <IconButton $width={39} aria-label="Decrease indent">
                  <Lines rules={[[0, 22, 1], [13, 22, 7], [13, 22, 13], [0, 22, 20]]}>
                    <path d="M10 10.500H1.500M5 7 1.500 10.500 5 14" stroke={azure} strokeWidth="1.8" />
                  </Lines>
                </IconButton>
                <IconButton $width={39} aria-label="Increase indent">
                  <Lines rules={[[0, 22, 1], [13, 22, 7], [13, 22, 13], [0, 22, 20]]}>
                    <path d="M0 10.500h8.500M5 7l3.500 3.500L5 14" stroke={azure} strokeWidth="1.8" />
                  </Lines>
                </IconButton>
              </Row>
            </Stack>
            <Rule $height={93} $gap={8} />
            <Stack $gap={12}>
              <Row>
                <IconButton $width={40} aria-label="Wrap text"><WrapIcon /></IconButton>
              </Row>
              <Row>
                <IconButton $width={38} aria-label="Merge and center"><MergeIcon /></IconButton>
                <MoreButton label="Merge options" width={32} />
              </Row>
            </Stack>
          </GroupBody>
          <Footer label="Alignment" launch />
        </Group>
        <GroupRule />

        <Group $width={241}>
          <GroupBody $left={12} $top={13}>
            <Stack $gap={12}>
              <Row>
                <Picker $width={218}>
                  <Select aria-label="Number format" defaultValue="General"><option>General</option></Select>
                  <PickerArrow><Chevron /></PickerArrow>
                </Picker>
              </Row>
              <Row>
                <IconButton $width={36} aria-label="Accounting format"><MoneyIcon /></IconButton>
                <MoreButton label="Accounting options" />
                <IconButton $width={46} aria-label="Percent"><PercentIcon /></IconButton>
                <IconButton $width={34} aria-label="Comma style"><CommaIcon /></IconButton>
                <Rule $height={36} $gap={2} />
                <IconButton $width={39} aria-label="Increase decimal"><DecimalIcon more /></IconButton>
                <IconButton $width={39} aria-label="Decrease decimal"><DecimalIcon /></IconButton>
              </Row>
            </Stack>
          </GroupBody>
          <Footer label="Number" launch />
        </Group>
        <GroupRule />

        <Group $width={274}>
          <GroupBody $left={18}>
            <Stack>
              <TextButton><CondIcon />Conditional Formatting<Chevron /></TextButton>
              <TextButton><PaintedGrid />Format as Table<Chevron /></TextButton>
              <TextButton><PaintedGrid full />Cell Styles<Chevron /></TextButton>
            </Stack>
          </GroupBody>
          <Footer label="Styles" />
        </Group>
        <GroupRule />

        <Group $width={156}>
          <GroupBody $left={18}>
            <Stack>
              <Row $height={39}>
                <TextButton $width={94}><InsertCellsIcon />Insert</TextButton>
                <MoreButton label="Insert options" width={24} />
              </Row>
              <Row $height={39}>
                <TextButton $width={98}><DeleteCellsIcon />Delete</TextButton>
                <MoreButton label="Delete options" width={24} />
              </Row>
              <TextButton><FormatCellsIcon />Format<Chevron /></TextButton>
            </Stack>
          </GroupBody>
          <Footer label="Cells" />
        </Group>
      </Ribbon>

      <ColumnHeads>
        <ColumnHead $width={6} />
        <ColumnHead $width={33} $selected>A</ColumnHead>
        <ColumnHead $width={197}>B</ColumnHead>
        {columns.map((c) => (
          <ColumnHead key={c} $width={67}>{c}</ColumnHead>
        ))}
      </ColumnHeads>

      <Sheet>
        <RowHeads aria-hidden="true">
          {rowHeights.map((h, i) => (
            <RowHead key={i} $height={h}>
              {i > 8 && <RowNumber $height={h}>{i + 1}</RowNumber>}
            </RowHead>
          ))}
        </RowHeads>
        <ActiveCell />
        <Sidebar>
          <SidePanel>
            <LogoRow><Logo /></LogoRow>
            <SideTitle>Inventory Management</SideTitle>
            <nav>
              {sideItems.map((item) => (
                <SideLink key={item.label} href="#" $height={item.height} $before={item.before}>
                  <svg width="60" height={item.height} viewBox={`0 0 60 ${item.height}`}>{item.art}</svg>
                  {item.label}
                </SideLink>
              ))}
            </nav>
          </SidePanel>
          <SideRest />
        </Sidebar>

        <Board>
          <TitleBox><span>Inventory</span> Management System</TitleBox>
          <Cards>
            {cards.map((c) => (
              <Card key={c.title} $top={c.top} $height={c.height} $after={c.after} $color={c.color} $bar={c.bar}>
                <CardTitle $left={c.tl} $top={c.tt}>{c.title}</CardTitle>
                <CardValue $left={c.vl} $gap={c.gap} $large={c.large}>{c.value}</CardValue>
              </Card>
            ))}
          </Cards>
          <Lower>
            <Charts>
              <ChartPanel $height={161}>
                <ChartTitle>Top 5 Products</ChartTitle>
                <BarChart
                  viewWidth={271}
                  origin={90.5}
                  step={53}
                  pitch={12.7}
                  bottom={94}
                  labelEnd={79}
                  ticks={["0", "20", "40", "60"]}
                  bars={[
                    { width: 40.5 },
                    { width: 40.5, label: "Joystick" },
                    { width: 48 },
                    { width: 103, label: "Rgb Keyboard" },
                    { width: 125 },
                    { width: 143, label: "Smart Watch" },
                  ]}
                />
              </ChartPanel>
              <ChartPanel $height={159}>
                <ChartTitle>Top 5 Customers</ChartTitle>
                <BarChart
                  viewWidth={276}
                  origin={90.5}
                  step={59}
                  pitch={15}
                  bottom={92}
                  labelEnd={78}
                  ticks={["0", "400000", "800000"]}
                  bars={[
                    { width: 6, label: "Amit " },
                    { width: 8.5 },
                    { width: 40.5, label: "Jain Tel." },
                    { width: 56.5 },
                    { width: 116.5, label: "Rajesh Kumar" },
                  ]}
                />
              </ChartPanel>
              <ChartPanel $height={206} $wide>
                <ChartTitle $plain>Total</ChartTitle>
                <TotalArea>
                  <TotalChart />
                  <TotalTable>
                    <thead>
                      <tr>
                        <td />
                        {totals.map(([lines]) => (
                          <th key={lines.join("")} scope="col">
                            {lines.map((l) => (
                              <div key={l}>{l}</div>
                            ))}
                          </th>
                        ))}
                      </tr>
                    </thead>
                    <tbody>
                      <tr>
                        <th scope="row"><Key />Total</th>
                        {totals.map(([lines, v]) => (
                          <td key={lines.join("")}>{v}</td>
                        ))}
                      </tr>
                    </tbody>
                  </TotalTable>
                </TotalArea>
              </ChartPanel>
            </Charts>
            <Notices>
              <NoticeHead>
                <h2>Notifications !!</h2>
                <NoticeClose aria-label="Close notifications">x</NoticeClose>
              </NoticeHead>
              <NoticeList>
                <Notice><Phone />Laptop HP xyz i5 Need to re-order ! PH 9812xxxxxx</Notice>
                <Notice><Phone />Speakers Need to re-order ! PH 9814xxxxxx</Notice>
              </NoticeList>
            </Notices>
          </Lower>
        </Board>
      </Sheet>

      <TabBar>
        <TabArrows>
          <TabArrow aria-label="Previous sheet">
            <svg width="10" height="16" viewBox="0 0 10 16" fill="none" stroke="#9a9f9b" strokeWidth="1.6"><path d="M8.500 1 1.500 8l7 7" /></svg>
          </TabArrow>
          <TabArrow aria-label="Next sheet">
            <svg width="10" height="16" viewBox="0 0 10 16" fill="none" stroke={line} strokeWidth="1.8"><path d="m1.500 1 7 7-7 7" /></svg>
          </TabArrow>
        </TabArrows>
        <ActiveTab>Dashboard</ActiveTab>
        <TabRule $before={6} />
        {sheetTabs.map((t) => (
          <React.Fragment key={t}>
            <Tab>{t}</Tab>
            <TabRule />
          </React.Fragment>
        ))}
        <TabTool $width={79} aria-label="More sheets">
          <svg width="18" height="6" viewBox="0 0 18 6" fill={line}><circle cx="3" cy="3" r="2.2" /><circle cx="9" cy="3" r="2.2" /><circle cx="15" cy="3" r="2.2" /></svg>
        </TabTool>
        <TabTool $width={16} aria-label="New sheet">
          <svg width="16" height="16" viewBox="0 0 16 16" stroke={line} strokeWidth="1.5"><path d="M8 0v16M0 8h16" /></svg>
        </TabTool>
        <TabTool $width={66} $left={16} aria-label="Tab options">
          <svg width="4" height="16" viewBox="0 0 4 16" fill={line}><path d="M.5.500h3v3h-3zM.5 6.500h3v3h-3zM.5 12.500h3v3h-3z" /></svg>
        </TabTool>
        <ScrollTrack>
          <svg width="11" height="14" viewBox="0 0 11 14" fill="#5f5f5f"><path d="M10 0v14L1 8.500Q0 7 1 5.500z" /></svg>
          <ScrollThumb />
        </ScrollTrack>
      </TabBar>
      <StatusBar>
        <svg width="9" height="9" viewBox="0 0 9 9" fill="none" stroke={line} strokeWidth="2"><circle cx="4.500" cy="4.500" r="3" /></svg>
      </StatusBar>
    </Page>
  );
}
